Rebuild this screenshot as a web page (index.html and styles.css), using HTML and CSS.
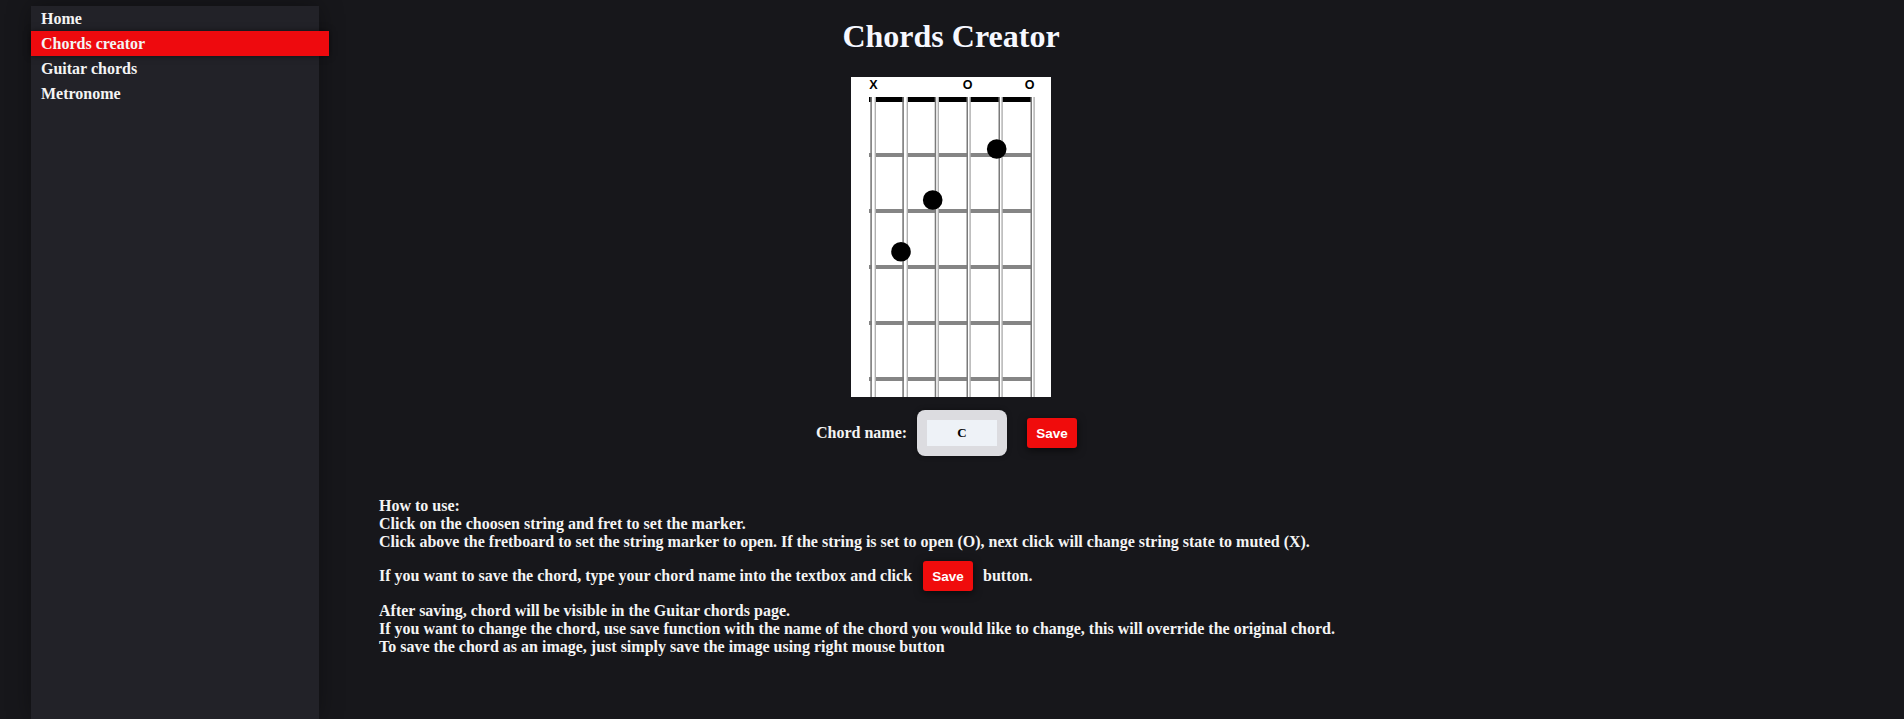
FILE: index.html
```html
<!DOCTYPE html>
<html lang="en">
<head>
<meta charset="utf-8">
<title>Chords Creator</title>
<link rel="stylesheet" href="styles.css">
</head>
<body>
<aside class="sidebar">
  <nav class="nav">
    <a class="nav-item" href="#">Home</a>
    <a class="nav-item active" href="#">Chords creator</a>
    <a class="nav-item" href="#">Guitar chords</a>
    <a class="nav-item" href="#">Metronome</a>
  </nav>
</aside>
<main class="main">
  <h1 class="title">Chords Creator</h1>
  <svg class="diagram" width="200" height="320" viewBox="0 0 200 320" xmlns="http://www.w3.org/2000/svg">
    <rect x="0" y="0" width="200" height="320" fill="#ffffff"/>
    <text x="22.3" y="12.3" class="mark">X</text>
    <text x="116.5" y="12.3" class="mark">O</text>
    <text x="178.7" y="12.3" class="mark">O</text>
    <rect x="18" y="20" width="165" height="5" fill="#000"/>
    <g fill="#858585">
      <rect x="18" y="76" width="165" height="4"/>
      <rect x="18" y="132" width="165" height="4"/>
      <rect x="18" y="188" width="165" height="4"/>
      <rect x="18" y="244" width="165" height="4"/>
      <rect x="18" y="300" width="165" height="4"/>
    </g>
    <g>
      <rect x="21" y="20" width="3" height="300" fill="#fff"/>
      <rect x="19.3" y="20" width="1.6" height="300" fill="#7a7a7a"/>
      <rect x="23.6" y="20" width="1.4" height="300" fill="#b0b0b0"/>

      <rect x="53" y="20" width="3" height="300" fill="#fff"/>
      <rect x="51.3" y="20" width="1.6" height="300" fill="#7a7a7a"/>
      <rect x="55.6" y="20" width="1.4" height="300" fill="#b0b0b0"/>

      <rect x="85" y="20" width="2" height="300" fill="#fff"/>
      <rect x="83.7" y="20" width="1.5" height="300" fill="#7a7a7a"/>
      <rect x="86.6" y="20" width="1.4" height="300" fill="#b0b0b0"/>

      <rect x="117" y="20" width="2" height="300" fill="#fff"/>
      <rect x="115.5" y="20" width="1.5" height="300" fill="#7a7a7a"/>
      <rect x="118.4" y="20" width="1.4" height="300" fill="#b0b0b0"/>

      <rect x="149" y="20" width="2" height="300" fill="#fff"/>
      <rect x="147.5" y="20" width="1.5" height="300" fill="#7a7a7a"/>
      <rect x="150.4" y="20" width="1.4" height="300" fill="#b0b0b0"/>

      <rect x="181" y="20" width="2" height="300" fill="#fff"/>
      <rect x="179.5" y="20" width="1.5" height="300" fill="#7a7a7a"/>
      <rect x="182.4" y="20" width="1.4" height="300" fill="#b0b0b0"/>
    </g>
    <circle cx="145.7" cy="72" r="9.8" fill="#000"/>
    <circle cx="81.7" cy="123" r="9.8" fill="#000"/>
    <circle cx="50" cy="174.7" r="9.8" fill="#000"/>
  </svg>
  <div class="chord-row">
    <span class="chord-label">Chord name:</span>
    <div class="input-wrap"><input class="chord-input" type="text" value="C"></div>
    <button class="save-btn row-save">Save</button>
  </div>
  <section class="help">
    <p class="help-block">How to use:<br>Click on the choosen string and fret to set the marker.<br>Click above the fretboard to set the string marker to open. If the string is set to open (O), next click will change string state to muted (X).</p>
    <div class="help-save">If you want to save the chord, type your chord name into the textbox and click <button class="save-btn inline-save">Save</button> button.</div>
    <p class="help-block after">After saving, chord will be visible in the Guitar chords page.<br>If you want to change the chord, use save function with the name of the chord you would like to change, this will override the original chord.<br>To save the chord as an image, just simply save the image using right mouse button</p>
  </section>
</main>
</body>
</html>
```
FILE: styles.css
```css
* { box-sizing: border-box; }
html, body { height: 100%; }
body {
  margin: 0;
  background: #17171b;
  color: #f4f4f4;
  font-family: "Liberation Serif", "Times New Roman", serif;
  font-weight: bold;
  font-size: 16px;
  display: flex;
  overflow: hidden;
}
.sidebar {
  flex: 0 0 288px;
  width: 288px;
  margin-left: 31px;
  margin-top: 6px;
  height: calc(100% - 6px);
  background: #222228;
  box-shadow: 0 0 22px rgba(0,0,0,0.35);
  position: relative;
  z-index: 1;
}
.nav { display: flex; flex-direction: column; }
.nav-item {
  display: block;
  height: 25px;
  line-height: 25px;
  padding-left: 10px;
  color: #f4f4f4;
  text-decoration: none;
  font-weight: bold;
  font-size: 16px;
}
.nav-item.active {
  background: #ee0a0e;
  width: calc(100% + 10px);
  box-shadow: 0 0 6px rgba(0,0,0,0.5);
}
.main {
  flex: 1;
  display: flex;
  flex-direction: column;
  align-items: center;
  padding-right: 321px;
}
.title {
  margin: 18px 0 23px;
  font-size: 32px;
  line-height: 36px;
  font-weight: bold;
  color: #f6f8ff;
}
.diagram { display: block; flex: none; }
.mark {
  font-family: "Liberation Sans", Arial, sans-serif;
  font-weight: bold;
  font-size: 12.5px;
  text-anchor: middle;
  fill: #000;
}
.chord-row {
  display: flex;
  align-items: center;
  margin-top: 13px;
  height: 46px;
  padding-right: 9px;
}
.chord-label {
  width: 90px;
  margin-right: 11px;
  white-space: nowrap;
}
.input-wrap {
  width: 90px;
  height: 46px;
  padding: 10px;
  background: #dcdce0;
  border-radius: 8px;
  box-shadow: 0 0 5px rgba(0,0,0,0.4);
}
.chord-input {
  display: block;
  width: 70px;
  height: 26px;
  border: none;
  outline: none;
  background: #eef2f7;
  text-align: center;
  font-family: "Liberation Serif", "Times New Roman", serif;
  font-weight: bold;
  font-size: 13px;
  color: #000;
  padding: 0;
}
.save-btn {
  width: 50px;
  height: 30px;
  border: none;
  border-radius: 3px;
  background: #f00c0c;
  color: #fff;
  font-family: "Liberation Sans", Arial, sans-serif;
  font-weight: bold;
  font-size: 13.5px;
  padding: 0;
  box-shadow: 0 2px 8px rgba(0,0,0,0.6);
}
.row-save { margin-left: 20px; }
.help {
  align-self: stretch;
  padding-left: 60px;
  margin-top: 41px;
}
.help-block {
  margin: 0;
  line-height: 18px;
}
.help-save {
  margin-top: 10px;
  height: 30px;
  line-height: 30px;
  white-space: nowrap;
}
.inline-save {
  vertical-align: top;
  margin: 0 6px 0 7px;
}
.help-block.after { margin-top: 11px; }
```
